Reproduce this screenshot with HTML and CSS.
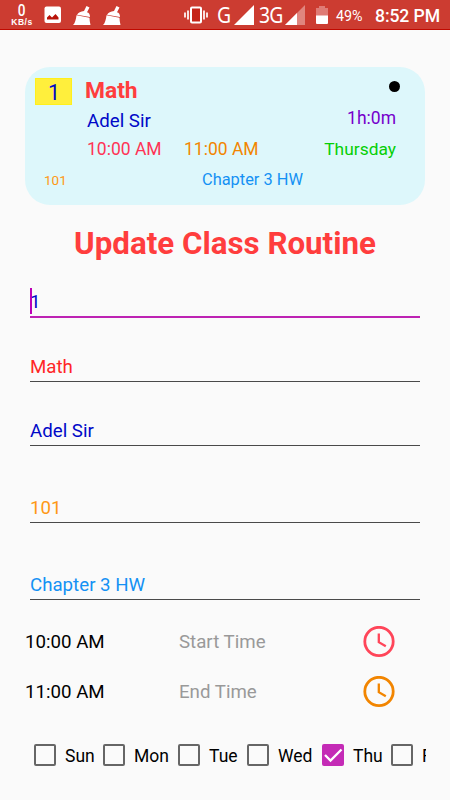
FILE: index.html
```html
<!DOCTYPE html>
<html lang="en">
<head>
<meta charset="utf-8">
<title>Update Class Routine</title>
<link rel="stylesheet" href="styles.css">
</head>
<body>
<header class="status">
  <div class="speed"><b>0</b><span>KB/s</span></div>
  <svg class="picture" width="18" height="18" viewBox="0 0 18 18"><rect x="0.5" y="0.5" width="16.500" height="16.500" rx="2" fill="#fff"/><path d="M3 13.500V11.500L5.500 9l2.500 2.500L11.500 8l3 3.500v2z" fill="#b81309"/></svg>
  <svg class="broom" width="20" height="20" viewBox="0 0 20 20"><path d="M14.500 0 17.500 1.500 15 6.200Q18 7 18 11L5 8.700Q7 5.500 12 5zM4.500 9.300 17.500 11.700Q17.500 15 18.500 19H1c2-1.500 3-5.500 3.500-9.700z" fill="#fff"/></svg>
  <svg class="broom second" width="20" height="20" viewBox="0 0 20 20"><path d="M14.500 0 17.500 1.500 15 6.200Q18 7 18 11L5 8.700Q7 5.500 12 5zM4.500 9.300 17.500 11.700Q17.500 15 18.500 19H1c2-1.500 3-5.500 3.500-9.700z" fill="#fff"/></svg>
  <svg class="vibrate" width="24" height="20" viewBox="0 0 24 20"><path d="M1 7.500v5M4 5.500v9M20 5.500v9M23 7.500v5" stroke="#fff" stroke-width="1.700"/><rect x="7" y="2.500" width="10" height="15" rx="1" fill="#c52519" stroke="#fff" stroke-width="2"/></svg>
  <span class="net g">G</span>
  <svg class="signal" width="20" height="20" viewBox="0 0 20 20"><path d="M20 0v20H0z" fill="#fff"/></svg>
  <span class="net g3">3G</span>
  <svg class="signal weak" width="20" height="20" viewBox="0 0 20 20"><path d="M20 0v20H0z" fill="#e0857e"/><path d="M12 8v12H0z" fill="#fff"/></svg>
  <svg class="battery" width="12" height="18" viewBox="0 0 12 18"><path d="M3 0h6v2h3v8H0V2h3z" fill="#df7b75"/><path d="M0 9.500h12V17q0 1-1 1H1q-1 0-1-1z" fill="#fff"/></svg>
  <span class="percent">49%</span>
  <span class="clock">8:52 PM</span>
</header>
<main>
  <section class="card">
    <div class="row top"><span class="badge">1</span><span class="subject">Math</span><i class="dot"></i></div>
    <div class="row teacher-row"><span class="teacher">Adel Sir</span><span class="duration">1h:0m</span></div>
    <div class="row times"><span class="start">10:00 AM</span><span class="end">11:00 AM</span><span class="day">Thursday</span></div>
    <div class="row notes"><span class="room">101</span><span class="chapter">Chapter 3 HW</span></div>
  </section>
  <h1>Update Class Routine</h1>
  <form>
    <div class="field active"><i class="caret"></i><span>1</span></div>
    <div class="field math"><span>Math</span></div>
    <div class="field name"><span>Adel Sir</span></div>
    <div class="field number"><span>101</span></div>
    <div class="field topic"><span>Chapter 3 HW</span></div>
    <div class="time"><span class="value">10:00 AM</span><span class="label">Start Time</span>
      <svg width="32" height="32" viewBox="0 0 32 32" fill="none" stroke="#ff4559"><circle cx="16" cy="15.500" r="14.200" stroke-width="2.800"/><path d="M15.800 7.500v8.700l7 4.100" stroke-width="2.300"/></svg></div>
    <div class="time"><span class="value">11:00 AM</span><span class="label">End Time</span>
      <svg width="32" height="32" viewBox="0 0 32 32" fill="none" stroke="#f28500"><circle cx="16" cy="15.500" r="14.200" stroke-width="2.800"/><path d="M15.800 7.500v8.700l7 4.100" stroke-width="2.300"/></svg></div>
    <div class="days">
      <div class="choice sun"><i class="box"></i><span>Sun</span></div>
      <div class="choice mon"><i class="box"></i><span>Mon</span></div>
      <div class="choice tue"><i class="box"></i><span>Tue</span></div>
      <div class="choice wed"><i class="box"></i><span>Wed</span></div>
      <div class="choice thu"><i class="box checked"><svg width="22" height="22" viewBox="0 0 22 22"><path d="M3 11l5.500 5.500L19.500 5.500" fill="none" stroke="#fff" stroke-width="2.300"/></svg></i><span>Thu</span></div>
      <div class="choice fri"><i class="box"></i><span class="cut">Fri</span></div>
    </div>
  </form>
</main>
</body>
</html>
```
FILE: styles.css
```css
* { box-sizing: border-box; }
body { margin: 0; width: 450px; height: 800px; overflow: hidden; background: #fafafa; font-family: Roboto, "Liberation Sans", sans-serif; font-size: 18.7px; }
span, h1, b { white-space: nowrap; }
svg { display: block; flex: none; }
.status { height: 30px; display: flex; align-items: flex-start; background: #cc3c31; border-bottom: 1px solid #c00900; color: #fff; }
.speed { width: 43px; padding-left: 1px; display: flex; flex-direction: column; align-items: center; flex: none; }
.speed b { font-size: 16px; line-height: 15px; margin-top: 3px; font-weight: 500; transform: scaleX(.85); }
.speed span { font: bold 8.5px/8px "Liberation Sans", sans-serif; letter-spacing: .5px; }
.picture { margin: 6px 0 0 1px; }
.broom { margin: 6px 0 0 10px; }
.broom.second { margin-left: 10px; }
.vibrate { margin: 5px 0 0 62px; }
.net { font-family: "Noto Sans", sans-serif; font-size: 22px; line-height: 29px; flex: none; transform: scaleX(.88); transform-origin: left; }
.g { width: 17px; margin-left: 9px; }
.g3 { width: 25px; margin-left: 5px; letter-spacing: -.8px; }
.signal { margin: 5px 0 0 0; }
.weak { margin-left: 1px; }
.battery { margin: 6px 0 0 11px; }
.percent { width: 39px; margin-left: 8px; font-size: 14.3px; line-height: 32px; }
.clock { font-size: 17.6px; line-height: 32px; font-weight: 500; letter-spacing: -.1px; }
.card { width: 400px; height: 138px; margin: 37px 0 0 25px; padding: 11px 29px 0 10px; border-radius: 25px; background: #ddf7fb; }
.row { display: flex; height: 28px; line-height: 28px; }
.badge { width: 37px; height: 27px; padding-left: 1px; text-align: center; background: #ffef3c; border: 1px solid #fff01b; color: #0008c8; font-size: 21.5px; line-height: 28px; }
.subject { margin-left: 13px; font-size: 22.8px; line-height: 25px; font-weight: 700; color: #ff3d3d; }
.dot { width: 11px; height: 11px; margin: 3px -4px 0 auto; border-radius: 50%; background: #000; }
.teacher-row { padding-left: 52px; line-height: 30px; color: #0008c8; }
.duration { margin-left: auto; line-height: 24px; font-size: 17.5px; color: #7600cc; }
.times { padding-left: 52px; font-size: 17.5px; line-height: 30px; }
.start { width: 97px; color: #ff3355; }
.end { color: #f28500; }
.day { margin-left: auto; font-size: 17.4px; color: #05cf05; }
.notes { padding-left: 9px; margin-top: 3px; line-height: 29px; font-size: 16.4px; }
.room { width: 158px; font-size: 13.5px; color: #ff9814; line-height: 31px; }
.chapter { color: #1491f4; }
h1 { margin: 18px 0 0; height: 42px; text-align: center; font-size: 31.3px; line-height: 42px; font-weight: 700; color: #ff3d3d; }
.field { width: 390px; height: 64px; margin-left: 30px; display: flex; align-items: flex-end; padding-bottom: 3px; line-height: 22px; border-bottom: 1px solid #494949; }
.active { position: relative; height: 53px; border-bottom: 2px solid #bd22b3; color: #0008c8; }
.caret { position: absolute; left: 0; bottom: 2px; width: 2px; height: 26px; background: #bd00b5; }
.math { color: #ff2626; }
.name { color: #0008c8; }
.number { height: 77px; color: #ff9814; }
.topic { height: 77px; color: #1491f4; }
.time { height: 50px; display: flex; align-items: center; margin-left: 25px; }
.topic + .time { margin-top: 17px; }
.value { width: 154px; color: #000; }
.label { width: 184px; color: #999; }
.days { margin: 26px 24px 0 34px; height: 24px; display: flex; align-items: center; overflow: hidden; font-size: 17.5px; color: #000; }
.choice { display: flex; align-items: center; flex: none; }
.choice span { padding-top: 2px; }
.box { width: 22px; height: 22px; border: 2px solid #666; border-radius: 2px; margin-right: 9px; flex: none; }
.checked { border: 0; background: #c42bb6; }
.sun { width: 69px; }
.mon { width: 75px; }
.tue { width: 69px; }
.wed { width: 75px; }
.thu { width: 69px; }
.cut { width: 3.5px; overflow: hidden; }
```
